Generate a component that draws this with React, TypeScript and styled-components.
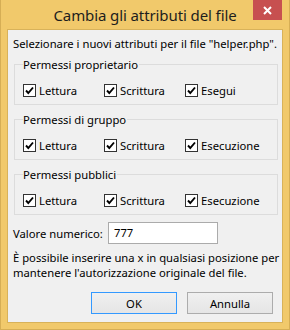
import React from 'react';
import styled, { createGlobalStyle } from 'styled-components';

const GlobalStyle = createGlobalStyle`
  html, body {
    margin: 0;
    padding: 0;
    background: #ffffff;
  }
  body {
    font-family: 'Noto Sans', 'Open Sans', sans-serif;
    font-size: 11.25px;
    color: #000;
  }
`;

const Window = styled.div`
  width: 290px;
  height: 330px;
  box-sizing: border-box;
  background: #f1c96b;
  border: 1px solid #d6ae55;
  border-top: none;
  display: flex;
  flex-direction: column;
  padding: 0 6px 6px 6px;
  white-space: nowrap;
`;

const TitleBar = styled.div`
  height: 29px;
  flex-shrink: 0;
  display: grid;
  grid-template-columns: 1fr auto 1fr;
  align-items: start;
`;

const Title = styled.div`
  grid-column: 2;
  font-size: 15px;
  line-height: 20px;
  margin-top: 5px;
  color: #1e1e1e;
  letter-spacing: -0.1px;
`;

const CloseButton = styled.div`
  grid-column: 3;
  justify-self: end;
  margin-right: 1px;
  width: 29px;
  height: 20px;
  background: #c75050;
  display: flex;
  align-items: center;
  justify-content: center;
`;

const Panel = styled.div`
  flex: 1;
  min-height: 0;
  background: #f0f0f0;
  border: 1px solid #d8b25a;
  padding: 6px 4px 0 5px;
  display: flex;
  flex-direction: column;
`;

const Text = styled.div`
  line-height: 15px;
`;

const Group = styled.fieldset`
  margin: 6px 0 0 1px;
  border: 1px solid #dcdcdc;
  padding: 11px 0 6px 8px;
  min-width: 0;

  & + & {
    margin-top: 7px;
  }
`;

const Legend = styled.legend`
  padding: 0 1px 0 0;
  line-height: 15px;
`;

const CheckRow = styled.div`
  display: grid;
  grid-template-columns: 81px 81px auto;
`;

const Check = styled.label`
  display: flex;
  align-items: center;
  gap: 3px;
  line-height: 15px;
`;

const Box = styled.span`
  width: 13px;
  height: 13px;
  box-sizing: border-box;
  border: 1px solid #333333;
  background: #ffffff;
  display: flex;
  align-items: center;
  justify-content: center;
`;

const ValueRow = styled.div`
  display: flex;
  align-items: center;
  margin-top: 7px;
`;

const ValueLabel = styled.span`
  width: 95px;
`;

const Input = styled.div`
  width: 110px;
  height: 22px;
  box-sizing: border-box;
  border: 1px solid #ababab;
  background: #ffffff;
  padding-left: 5px;
  line-height: 20px;
`;

const Note = styled(Text)`
  margin-top: 6px;
`;

const Buttons = styled.div`
  display: flex;
  justify-content: flex-end;
  gap: 10px;
  margin-top: 12px;
  padding-right: 5px;
`;

const Button = styled.div<{ $focused?: boolean }>`
  width: 86px;
  height: 22px;
  box-sizing: border-box;
  border: 1px solid ${(p) => (p.$focused ? '#3399ff' : '#acacac')};
  background: linear-gradient(#f0f0f0, #e5e5e5);
  display: flex;
  align-items: center;
  justify-content: center;
`;

const CheckMark = () => (
  <svg width="9" height="9" viewBox="0 0 9 9">
    <path d="M1 4.5 L3.3 7 L8 1.5" fill="none" stroke="#000" strokeWidth="1.9" />
  </svg>
);

const groups = [
  { legend: 'Permessi proprietario', items: ['Lettura', 'Scrittura', 'Esegui'] },
  { legend: 'Permessi di gruppo', items: ['Lettura', 'Scrittura', 'Esecuzione'] },
  { legend: 'Permessi pubblici', items: ['Lettura', 'Scrittura', 'Esecuzione'] },
];

export default function App() {
  return (
    <>
      <GlobalStyle />
      <Window>
        <TitleBar>
          <Title>Cambia gli attributi del file</Title>
          <CloseButton>
            <svg width="9" height="9" viewBox="0 0 9 9">
              <path d="M1 1 L8 8 M8 1 L1 8" stroke="#fff" strokeWidth="2" />
            </svg>
          </CloseButton>
        </TitleBar>
        <Panel>
          <Text>Selezionare i nuovi attributi per il file "helper.php".</Text>
          {groups.map((g) => (
            <Group key={g.legend}>
              <Legend>{g.legend}</Legend>
              <CheckRow>
                {g.items.map((item) => (
                  <Check key={item}>
                    <Box>
                      <CheckMark />
                    </Box>
                    {item}
                  </Check>
                ))}
              </CheckRow>
            </Group>
          ))}
          <ValueRow>
            <ValueLabel>Valore numerico:</ValueLabel>
            <Input>777</Input>
          </ValueRow>
          <Note>
            È possibile inserire una x in qualsiasi posizione per
            <br />
            mantenere l'autorizzazione originale del file.
          </Note>
          <Buttons>
            <Button $focused>OK</Button>
            <Button>Annulla</Button>
          </Buttons>
        </Panel>
      </Window>
    </>
  );
}
